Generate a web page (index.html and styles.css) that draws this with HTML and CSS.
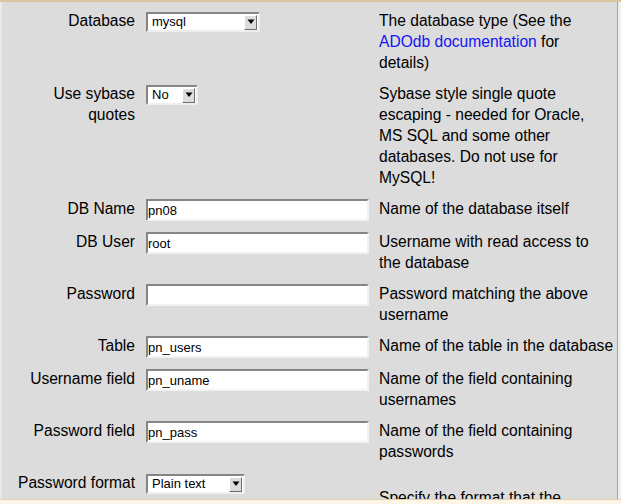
FILE: index.html
```html
<!DOCTYPE html>
<html>
<head>
<meta charset="utf-8">
<title>Database settings</title>
<link rel="stylesheet" href="styles.css">
</head>
<body>
<div class="frame">
  <div class="panel">
    <div class="form">
      <div class="label">Database</div>
      <div class="field">
        <div class="select w-db"><span class="value">mysql</span><span class="btn"><svg width="8" height="6" viewBox="0 0 8 6"><path d="M0.5 0.5 H7.5 L4 5 Z" fill="#000"/></svg></span></div>
      </div>
      <div class="desc">The database type (See the<br><a href="#">ADOdb documentation</a> for<br>details)</div>

      <div class="label">Use sybase quotes</div>
      <div class="field">
        <div class="select w-yn"><span class="value">No</span><span class="btn"><svg width="8" height="6" viewBox="0 0 8 6"><path d="M0.5 0.5 H7.5 L4 5 Z" fill="#000"/></svg></span></div>
      </div>
      <div class="desc">Sybase style single quote<br>escaping - needed for Oracle,<br>MS SQL and some other<br>databases. Do not use for<br>MySQL!</div>

      <div class="label">DB Name</div>
      <div class="field"><input class="input" type="text" value="pn08"></div>
      <div class="desc">Name of the database itself</div>

      <div class="label">DB User</div>
      <div class="field"><input class="input" type="text" value="root"></div>
      <div class="desc">Username with read access to<br>the database</div>

      <div class="label">Password</div>
      <div class="field"><input class="input" type="password" value=""></div>
      <div class="desc">Password matching the above<br>username</div>

      <div class="label">Table</div>
      <div class="field"><input class="input" type="text" value="pn_users"></div>
      <div class="desc">Name of the table in the database</div>

      <div class="label">Username field</div>
      <div class="field"><input class="input" type="text" value="pn_uname"></div>
      <div class="desc">Name of the field containing<br>usernames</div>

      <div class="label">Password field</div>
      <div class="field"><input class="input" type="text" value="pn_pass"></div>
      <div class="desc">Name of the field containing<br>passwords</div>

      <div class="label">Password format</div>
      <div class="field">
        <div class="select w-fmt"><span class="value">Plain text</span><span class="btn"><svg width="8" height="6" viewBox="0 0 8 6"><path d="M0.5 0.5 H7.5 L4 5 Z" fill="#000"/></svg></span></div>
      </div>
      <div class="desc desc-low">Specify the format that the<br>passwords are stored in</div>
    </div>
  </div>
</div>
</body>
</html>
```
FILE: styles.css
```css
html, body {
  margin: 0;
  padding: 0;
}
body {
  width: 621px;
  height: 504px;
  overflow: hidden;
  background: #fcf5e8;
  font-family: "Liberation Sans", Arial, sans-serif;
  font-size: 15.6px;
  line-height: 21px;
  color: #000;
}
.frame {
  height: 497px;
  border-top: 2px solid #d7c69e;
  border-bottom: 1px solid #e2d2ad;
  background: #efefef;
  overflow: hidden;
}
.panel {
  width: 615px;
  height: 100%;
  border-left: 2px solid #e9e9e9;
  border-right: 1px solid #a5a5a5;
  background: #dcdcdc;
}
.form {
  display: grid;
  grid-template-columns: 133px 244px 238px;
  row-gap: 10px;
  padding-top: 8px;
}
.label {
  text-align: right;
  padding-left: 10px;
}
.field {
  padding-left: 11px;
  padding-top: 1px;
}
.desc {
  padding-right: 2px;
  white-space: nowrap;
}
.desc-low {
  padding-top: 15px;
}
.desc a {
  color: #1414f5;
  text-decoration: none;
}
.input {
  display: block;
  box-sizing: border-box;
  width: 223px;
  height: 22px;
  margin: 0;
  padding: 0;
  border: 2px solid;
  border-color: #858585 #f2f2f2 #f2f2f2 #858585;
  background: #fff;
  font-family: "Liberation Sans", Arial, sans-serif;
  font-size: 13px;
  color: #000;
  outline: none;
}
.select {
  display: flex;
  align-items: center;
  box-sizing: border-box;
  height: 20px;
  margin-top: 1px;
  border: 2px solid;
  border-color: #858585 #eeeeee #eeeeee #858585;
  background: #fff;
  font-size: 13px;
  line-height: 16px;
}
.value {
  flex: 1;
  padding-left: 4px;
}
.btn {
  display: flex;
  align-items: center;
  justify-content: center;
  box-sizing: border-box;
  width: 13px;
  height: 15px;
  margin-right: 1px;
  border: 1px solid;
  border-color: #ffffff #6e6e6e #6e6e6e #ffffff;
  background: #dcdcdc;
}
.w-db { width: 114px; }
.w-yn { width: 52px; }
.w-fmt { width: 99px; }
```
